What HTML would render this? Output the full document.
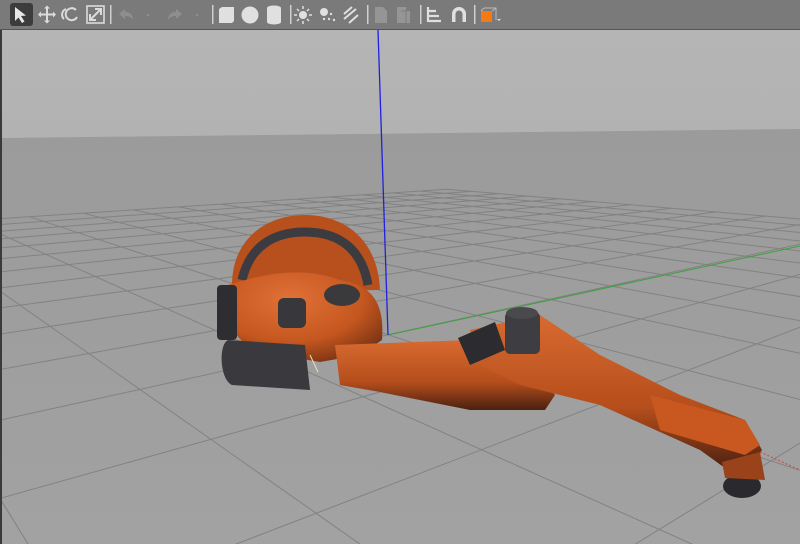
<!DOCTYPE html>
<html><head><meta charset="utf-8"><style>
html,body{margin:0;padding:0;width:800px;height:544px;overflow:hidden;background:#999;font-family:"Liberation Sans",sans-serif}
svg{display:block}
#tb{position:absolute;left:0;top:0;width:800px;height:29px;background:#7a7a7a;border-bottom:1px solid #555}
#vp{position:absolute;left:0;top:30px;width:800px;height:514px;overflow:hidden}
</style></head><body>
<div id="tb">
<svg width="800" height="29" viewBox="0 0 800 29">
<rect x="10" y="3" width="23" height="23" rx="3" fill="#3c3c3c"/>
<path d="M15 7 L15 21 L18.5 17.5 L22 23 L24.5 21.5 L21 16 L26 15.5 Z" fill="#e8e8e8"/>
<g stroke="#dcdcdc" stroke-width="2" fill="#dcdcdc">
<path d="M47 7 V22 M39.5 14.5 H54.5" fill="none"/>
<path d="M47 5.5 l-3 3 h6z M47 23.5 l-3 -3 h6z M38 14.5 l3 -3 v6z M56 14.5 l-3 -3 v6z" stroke="none"/>
<path d="M76 10 A6 6 0 1 0 77 17" fill="none"/><path d="M64 19 A6 6 0 0 1 66 9" fill="none"/>
<rect x="87" y="6" width="17" height="17" fill="none" stroke-width="1.6"/><path d="M90 20 L101 9 M95 9 H101 V15 M90 14 V20 H96" fill="none"/>
</g>
<rect x="110" y="5" width="1.5" height="19" fill="#cfcfcf"/>
<path d="M125 9 l-6 5 l6 5 v-3 c4 0 6 1 8 4 c0 -5 -3 -8 -8 -8z" fill="#8e8e8e"/>
<circle cx="148" cy="15" r="1.2" fill="#8e8e8e"/>
<path d="M176 9 l6 5 l-6 5 v-3 c-4 0 -6 1 -8 4 c0 -5 3 -8 8 -8z" fill="#8e8e8e"/>
<circle cx="197" cy="15" r="1.2" fill="#8e8e8e"/>
<rect x="212" y="5" width="1.5" height="19" fill="#cfcfcf"/>
<path d="M219 9 l3 -2 h12 v14 l-2 2 h-13z" fill="#e0e0e0"/>
<circle cx="250" cy="15" r="8.5" fill="#e0e0e0"/>
<path d="M267 8 a7 2.5 0 0 1 14 0 v14 a7 2.5 0 0 1 -14 0z" fill="#e0e0e0"/>
<rect x="290" y="5" width="1.5" height="19" fill="#cfcfcf"/>
<circle cx="303" cy="15" r="4" fill="#e0e0e0"/>
<g stroke="#e0e0e0" stroke-width="1.5"><path d="M303 6v3M303 21v3M294 15h3M309 15h3M297 9l2 2M307 19l2 2M297 21l2-2M307 11l2-2"/></g>
<circle cx="324" cy="12" r="4" fill="#e0e0e0"/><g fill="#e0e0e0"><circle cx="331" cy="14" r="1.2"/><circle cx="329" cy="19" r="1.2"/><circle cx="334" cy="20" r="1.2"/><circle cx="324" cy="19" r="1.2"/></g>
<g stroke="#e0e0e0" stroke-width="2"><path d="M344 14 l8 -7 M344 19 l12 -10 M349 23 l9 -8"/></g>
<rect x="367" y="5" width="1.5" height="19" fill="#cfcfcf"/>
<path d="M375 7 h8 l4 4 v12 h-12z" fill="#959595"/>
<path d="M397 7 h9 v4 h4 v12 h-13z" fill="#959595"/><path d="M401 11 h5 v12" fill="none" stroke="#7a7a7a"/>
<rect x="420" y="5" width="1.5" height="19" fill="#cfcfcf"/>
<path d="M428 7 v15 M428 11 h8 M428 16 h11 M428 21 h13" stroke="#e0e0e0" stroke-width="2.2"/>
<path d="M452 22 v-8 a7 7 0 0 1 14 0 v8 h-3.5 v-8 a3.5 3.5 0 0 0 -7 0 v8z" fill="#e0e0e0"/>
<rect x="474" y="5" width="1.5" height="19" fill="#cfcfcf"/>
<rect x="481" y="11" width="11" height="11" fill="#f57a14"/>
<path d="M484 8 h12 v12 M484 8 l-3 3 M496 8 l-4 3" fill="none" stroke="#bbb" stroke-width="1"/>
<path d="M497 19 l2 2 l2 -2z" fill="#ddd"/>
</svg>
</div>
<div id="vp">
<svg id="sc" width="800" height="514" viewBox="0 30 800 514">
<defs>
<linearGradient id="sky" x1="0" y1="0" x2="0" y2="1"><stop offset="0" stop-color="#b5b5b5"/><stop offset="1" stop-color="#b2b2b2"/></linearGradient>
<linearGradient id="gr" x1="0" y1="0" x2="0" y2="1"><stop offset="0" stop-color="#999"/><stop offset="0.2" stop-color="#9b9b9b"/><stop offset="1" stop-color="#a2a2a2"/></linearGradient>
<radialGradient id="or" cx="0.4" cy="0.3" r="0.8"><stop offset="0" stop-color="#e07238"/><stop offset="0.6" stop-color="#c4561f"/><stop offset="1" stop-color="#6e2e12"/></radialGradient>
<linearGradient id="arm" x1="0" y1="0" x2="0" y2="1"><stop offset="0" stop-color="#d86a30"/><stop offset="0.6" stop-color="#b54e1c"/><stop offset="1" stop-color="#4a2010"/></linearGradient>
</defs>
<rect x="0" y="30" width="800" height="514" fill="url(#gr)"/>
<polygon points="0,30 800,30 800,129 0,138" fill="url(#sky)"/>
<g id="grid" stroke="#828282" stroke-width="1" fill="none"></g>
<line x1="388" y1="335" x2="800" y2="246" stroke="#3fa03f" stroke-width="1"/>
<line x1="760" y1="452" x2="800" y2="470" stroke="#d04040" stroke-width="1" stroke-dasharray="2,2"/>
<line x1="378" y1="30" x2="388" y2="335" stroke="#2020e0" stroke-width="1.3"/>
<rect x="0" y="30" width="2" height="514" fill="#3a3a3a"/>
<g>
<path d="M232 285 C232 240 265 215 305 215 C345 215 378 240 380 290 L232 292Z" fill="#b8501e"/>
<path d="M242 280 C250 245 275 232 305 232 C340 232 362 250 368 285" fill="none" stroke="#3b3b40" stroke-width="9"/>
<path d="M228 285 C260 275 300 265 340 280 C370 285 385 300 382 340 L360 355 L320 362 L250 350 L232 330Z" fill="url(#or)"/>
<ellipse cx="342" cy="295" rx="18" ry="11" fill="#3a3a3d"/>
<rect x="278" y="298" width="28" height="30" rx="6" fill="#38383c"/>
<rect x="217" y="285" width="20" height="55" rx="4" fill="#2e2e32"/>
<path d="M335 345 L470 340 L545 380 L555 395 L545 410 L470 410 L380 392 L340 385 Z" fill="url(#arm)"/>
<path d="M228 340 L305 345 L310 390 L232 385 C220 380 218 345 228 340Z" fill="#3a3a3e"/>
<path d="M310 355 L318 372" stroke="#e8e0c0" stroke-width="1"/>
<path d="M470 330 L540 315 L600 355 L680 395 L745 420 L762 450 L748 470 L725 468 L700 450 L600 405 L520 385 L480 365Z" fill="url(#arm)"/>
<path d="M650 395 L745 420 L760 445 L745 455 L660 430Z" fill="#c8581f"/>
<rect x="505" y="312" width="35" height="42" rx="5" fill="#3e3e42"/>
<ellipse cx="522" cy="313" rx="16" ry="6" fill="#4a4a4e"/>
<path d="M458 338 L495 322 L505 350 L470 365Z" fill="#2c2c30"/>
<ellipse cx="742" cy="486" rx="19" ry="12" fill="#2a2a2e"/>
<path d="M722 462 L760 452 L765 480 L725 478Z" fill="#9a4219"/>
</g>
</svg>
</div>
<script>
(function(){
var f=752,H=3.22,X0=-0.19,Z0=12,cx=400,hy=133;
var g=document.getElementById('grid'),s='';
function cam(x,y){return [X0+x*0.639+y*0.769, Z0-x*0.769+y*0.639];}
function seg(a,b){
 var A=cam(a[0],a[1]),B=cam(b[0],b[1]),zm=0.8;
 if(A[1]<zm&&B[1]<zm)return;
 if(A[1]<zm){var t=(zm-A[1])/(B[1]-A[1]);A=[A[0]+t*(B[0]-A[0]),zm];}
 if(B[1]<zm){var t=(zm-B[1])/(A[1]-B[1]);B=[B[0]+t*(A[0]-B[0]),zm];}
 var p=function(P){return (cx+f*P[0]/P[1]).toFixed(1)+','+(hy+f*H/P[1]).toFixed(1);};
 s+='M'+p(A)+'L'+p(B);
}
var N=22;
for(var i=-N;i<=N;i+=2){seg([i,-N],[i,N]);seg([-N,i],[N,i]);}
g.innerHTML='<path d="'+s+'"/>';
})();
</script>
</body></html>
